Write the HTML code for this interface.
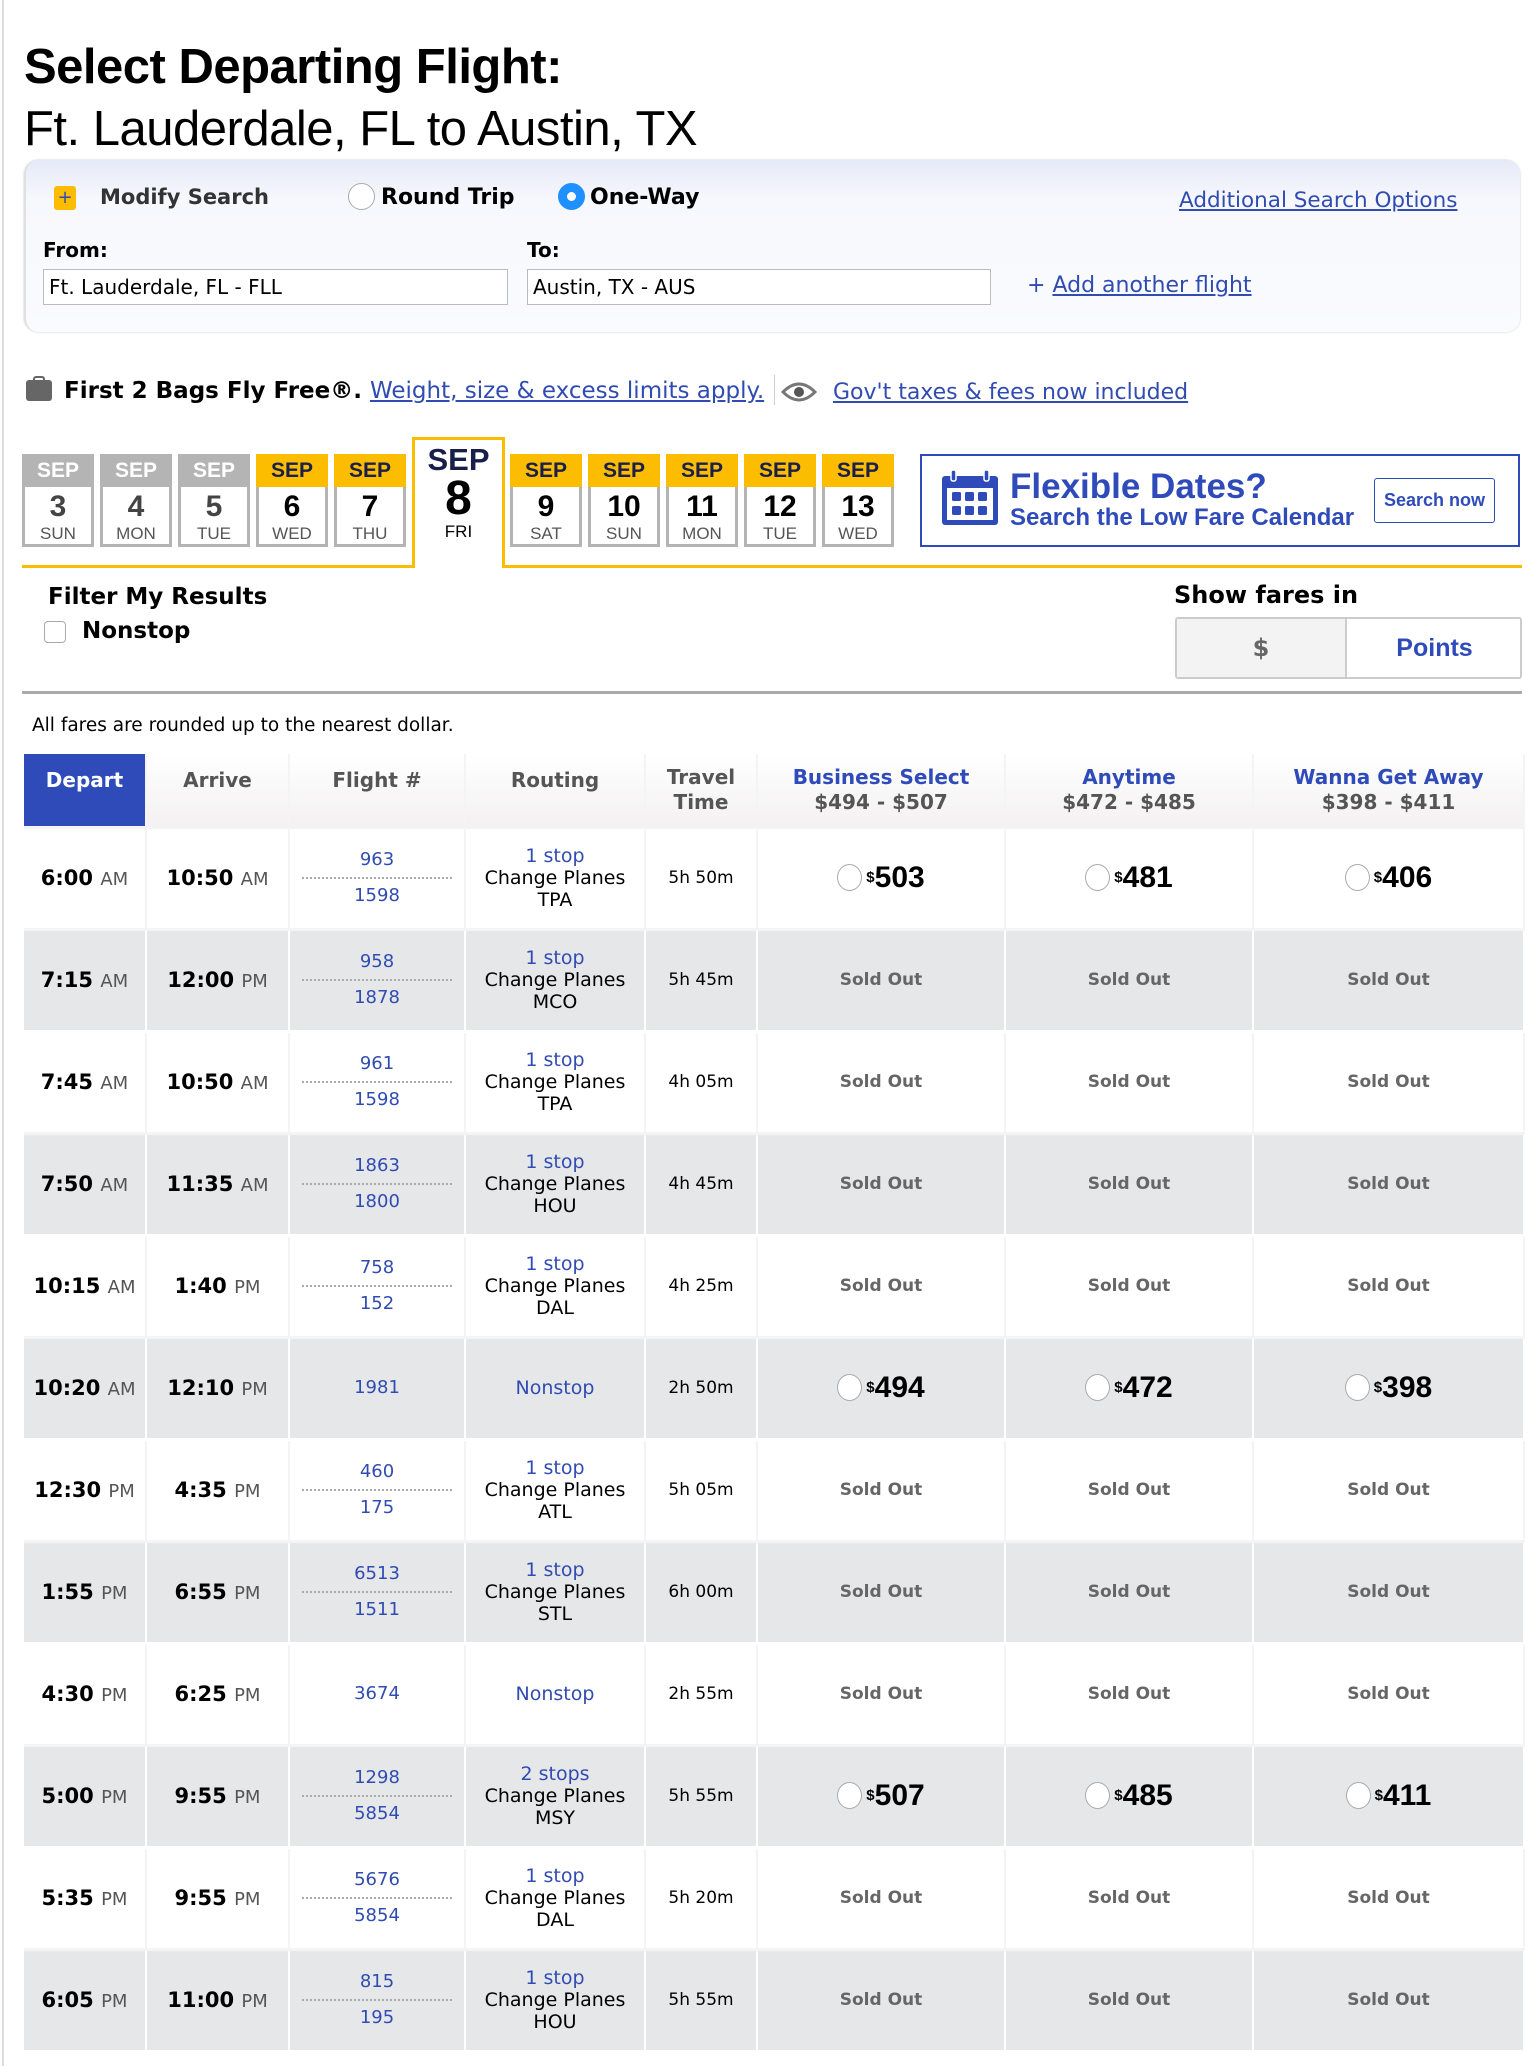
<!DOCTYPE html>
<html><head><meta charset="utf-8">
<style>
*{box-sizing:border-box;margin:0;padding:0}
body{width:1532px;height:2066px;background:#fff;position:relative;overflow:hidden;font-family:"DejaVu Sans","Liberation Sans",sans-serif;color:#000}
.abs{position:absolute}
.lsans{font-family:"Liberation Sans",Arial,sans-serif}
a{color:#304cb2}
.leftline{position:absolute;left:2px;top:0;width:2px;height:2066px;background:#ddd}
.title{left:24px;top:36px;font-family:"Liberation Sans",sans-serif;font-size:49px;line-height:62px;letter-spacing:-0.5px}
.sbox{left:24px;top:160px;width:1496px;height:172px;border-radius:14px;background:linear-gradient(#e6e9f7 0px,#f7f8fd 40px,#fafbfe 100%);box-shadow:0 0 2px #ccc;border-left:2px solid #e0e0e0}
.inp{height:36px;border:1px solid #bbb;background:#fff;font-size:20px;line-height:34px;padding-left:5px;font-family:"DejaVu Sans",sans-serif}
.radio{width:27px;height:27px;border-radius:50%;border:1px solid #aaa;background:#fff}
.dbox{position:absolute;top:454px;width:72px;height:93px;border:3px solid #b4b4b4;border-top:none;background:#fff;text-align:center;font-family:"Liberation Sans",sans-serif}
.dbox .h{height:33px;line-height:33px;font-size:21px;font-weight:bold;margin:0 -3px;color:#fff;background:#b4b4b4}
.dbox.y .h{background:#fcbd00;color:#1a1f4a}
.dbox .n{font-size:30px;font-weight:bold;line-height:34px;margin-top:3px;color:#444}
.dbox.y .n{color:#000}
.dbox .d{font-size:17px;color:#555;line-height:20px}
table{position:absolute;left:24px;top:754px;border-collapse:collapse;width:1500px;table-layout:fixed}
td,th{text-align:center;vertical-align:middle;border-right:2px solid #f4f4f4;border-bottom:3px solid #f4f4f4}
th{height:73px;background:linear-gradient(#fff,#f3f1f1);font-size:20px;color:#555;font-weight:bold;line-height:25px;padding-top:2px}
th.dep{background:#2f4bba;color:#fff;vertical-align:top;padding-top:14px}
th.fare{color:#2f4bba}
th.fare span{color:#555}
tr.r td{height:102px}
tr.g td{background:#e6e7e9;border-right:2px solid #fff;border-bottom:3px solid #fff}
.t{font-size:21px;font-weight:bold}
.t small{font-size:18px;font-weight:normal;color:#555}
.fn{color:#304cb2;font-size:18px;line-height:34px}
.fn .ln{border-top:2px dotted #aaa;margin:0 12px}
.rt{font-size:19px;line-height:22px}
.rt .b{color:#304cb2}
.tt{font-size:17px}
.so{font-size:17px;font-weight:bold;color:#666}
.pr{font-size:30px;font-weight:bold;display:inline-flex;align-items:center;font-family:"Liberation Sans",sans-serif}
.pr i{display:inline-block;width:25px;height:27px;border-radius:50%;border:1px solid #aaa;background:#fff;margin-right:4px}
.pr sup{font-size:15px;vertical-align:10px}
</style></head><body>
<div class="leftline"></div>
<div class="abs title"><b>Select Departing Flight:</b><br>Ft. Lauderdale, FL to Austin, TX</div>

<div class="abs sbox"></div>
<div class="abs" style="left:54px;top:186px;width:22px;height:24px;background:#fcbd00;border-radius:3px;color:#304cb2;font-size:18px;line-height:24px;text-align:center">+</div>
<div class="abs" style="left:100px;top:183px;font-size:21px;font-weight:bold;color:#333;line-height:28px">Modify Search</div>
<div class="abs radio" style="left:348px;top:183px"></div>
<div class="abs" style="left:381px;top:184px;font-size:22px;font-weight:bold;line-height:28px">Round Trip</div>
<div class="abs radio" style="left:558px;top:183px;background:#1e90ff;border-color:#1e90ff"><div style="width:9px;height:9px;border-radius:50%;background:#fff;margin:8px auto"></div></div>
<div class="abs" style="left:590px;top:184px;font-size:22px;font-weight:bold;line-height:28px">One-Way</div>
<a class="abs" style="left:1179px;top:188px;font-size:21.5px;line-height:26px;text-decoration:underline">Additional Search Options</a>
<div class="abs" style="left:43px;top:237px;font-size:20px;font-weight:bold;line-height:26px">From:</div>
<div class="abs" style="left:527px;top:237px;font-size:20px;font-weight:bold;line-height:26px">To:</div>
<div class="abs inp" style="left:43px;top:269px;width:465px">Ft. Lauderdale, FL - FLL</div>
<div class="abs inp" style="left:527px;top:269px;width:464px">Austin, TX - AUS</div>
<div class="abs" style="left:1027px;top:272px;font-size:22px;line-height:28px;color:#304cb2">+&nbsp;<a style="text-decoration:underline">Add another flight</a></div>

<div class="abs" style="left:26px;top:380px;width:26px;height:21px;background:#666;border-radius:3px"></div>
<div class="abs" style="left:33px;top:376px;width:12px;height:6px;border:2px solid #666;border-bottom:none;border-radius:3px 3px 0 0"></div>
<div class="abs" style="left:64px;top:377px;font-size:23px;font-weight:bold;line-height:28px;white-space:nowrap">First 2 Bags Fly Free®. <a style="font-weight:normal;text-decoration:underline">Weight, size &amp; excess limits apply.</a></div>
<div class="abs" style="left:774px;top:375px;width:1px;height:30px;background:#ccc"></div>
<svg class="abs" style="left:781px;top:378px" width="36" height="28" viewBox="0 0 36 28"><path d="M2 14 Q18 -2 34 14 Q18 30 2 14Z" fill="#fff" stroke="#777" stroke-width="3"/><circle cx="18" cy="14" r="5" fill="#555"/></svg>
<a class="abs" style="left:833px;top:379px;font-size:22px;line-height:28px;text-decoration:underline;white-space:nowrap">Gov't taxes &amp; fees now included</a>

<div class="dbox" style="left:22px"><div class="h">SEP</div><div class="n">3</div><div class="d">SUN</div></div>
<div class="dbox" style="left:100px"><div class="h">SEP</div><div class="n">4</div><div class="d">MON</div></div>
<div class="dbox" style="left:178px"><div class="h">SEP</div><div class="n">5</div><div class="d">TUE</div></div>
<div class="dbox y" style="left:256px"><div class="h">SEP</div><div class="n">6</div><div class="d">WED</div></div>
<div class="dbox y" style="left:334px"><div class="h">SEP</div><div class="n">7</div><div class="d">THU</div></div>
<div class="dbox y" style="left:510px"><div class="h">SEP</div><div class="n">9</div><div class="d">SAT</div></div>
<div class="dbox y" style="left:588px"><div class="h">SEP</div><div class="n">10</div><div class="d">SUN</div></div>
<div class="dbox y" style="left:666px"><div class="h">SEP</div><div class="n">11</div><div class="d">MON</div></div>
<div class="dbox y" style="left:744px"><div class="h">SEP</div><div class="n">12</div><div class="d">TUE</div></div>
<div class="dbox y" style="left:822px"><div class="h">SEP</div><div class="n">13</div><div class="d">WED</div></div>
<div class="abs" style="left:22px;top:565px;width:392px;height:3px;background:#fcbd00"></div>
<div class="abs" style="left:502px;top:565px;width:1020px;height:3px;background:#fcbd00"></div>
<div class="abs lsans" style="left:412px;top:437px;width:93px;height:131px;border:3px solid #fcbd00;border-bottom:none;background:#fff;text-align:center">
<div style="font-size:31px;font-weight:bold;color:#1a1f4a;line-height:32px;margin-top:4px">SEP</div>
<div style="font-size:48px;font-weight:bold;line-height:46px">8</div>
<div style="font-size:17px;line-height:20px">FRI</div></div>

<div class="abs lsans" style="left:920px;top:454px;width:600px;height:93px;border:2px solid #2f4bba"></div>
<svg class="abs" style="left:941px;top:470px" width="58" height="56" viewBox="0 0 58 56"><rect x="1" y="6" width="56" height="49" rx="3" fill="#2f4bba"/><rect x="6" y="18" width="46" height="32" fill="#fff"/><rect x="10" y="0" width="5" height="11" rx="2" fill="#2f4bba" stroke="#fff" stroke-width="1.5"/><rect x="43" y="0" width="5" height="11" rx="2" fill="#2f4bba" stroke="#fff" stroke-width="1.5"/><g fill="#2f4bba"><rect x="11" y="22" width="9" height="9" rx="1.5"/><rect x="24" y="22" width="9" height="9" rx="1.5"/><rect x="37" y="22" width="9" height="9" rx="1.5"/><rect x="11" y="36" width="9" height="9" rx="1.5"/><rect x="24" y="36" width="9" height="9" rx="1.5"/><rect x="37" y="36" width="9" height="9" rx="1.5"/></g></svg>
<div class="abs lsans" style="left:1010px;top:467px;font-size:35px;font-weight:bold;color:#2f4bba;line-height:40px">Flexible Dates?</div>
<div class="abs lsans" style="left:1010px;top:504px;font-size:24px;font-weight:bold;color:#2f4bba;line-height:28px">Search the Low Fare Calendar</div>
<div class="abs lsans" style="left:1374px;top:478px;width:121px;height:45px;border:1px solid #2f4bba;border-radius:3px;font-size:18px;font-weight:bold;color:#2f4bba;line-height:43px;text-align:center">Search now</div>

<div class="abs" style="left:48px;top:582px;font-size:23px;font-weight:bold;line-height:30px">Filter My Results</div>
<div class="abs" style="left:44px;top:621px;width:22px;height:22px;border:1px solid #aaa;border-radius:4px;background:#fff"></div>
<div class="abs" style="left:82px;top:616px;font-size:23px;font-weight:bold;line-height:30px">Nonstop</div>
<div class="abs" style="left:1174px;top:580px;font-size:24px;font-weight:bold;line-height:30px">Show fares in</div>
<div class="abs" style="left:1175px;top:617px;width:347px;height:62px;border:2px solid #ccc;border-radius:3px;background:#fff"></div>
<div class="abs" style="left:1177px;top:619px;width:170px;height:58px;background:#f3f3f3;border-right:2px solid #ccc;text-align:center;font-size:24px;font-weight:bold;color:#666;line-height:58px">$</div>
<div class="abs lsans" style="left:1349px;top:619px;width:171px;height:58px;text-align:center;font-size:25px;font-weight:bold;color:#2f4bba;line-height:58px">Points</div>

<div class="abs" style="left:22px;top:691px;width:1500px;height:3px;background:#aaa"></div>
<div class="abs" style="left:32px;top:713px;font-size:18.5px;line-height:26px">All fares are rounded up to the nearest dollar.</div>

<table>
<colgroup><col style="width:122px"><col style="width:143px"><col style="width:176px"><col style="width:180px"><col style="width:112px"><col style="width:248px"><col style="width:248px"><col style="width:271px"></colgroup>
<tr><th class="dep">Depart</th><th style="vertical-align:top;padding-top:14px">Arrive</th><th style="vertical-align:top;padding-top:14px">Flight #</th><th style="vertical-align:top;padding-top:14px">Routing</th><th style="padding-top:0">Travel<br>Time</th><th class="fare" style="padding-top:0">Business Select<br><span>$494 - $507</span></th><th class="fare" style="padding-top:0">Anytime<br><span>$472 - $485</span></th><th class="fare" style="padding-top:0">Wanna Get Away<br><span>$398 - $411</span></th></tr>

<tr class="r"><td class="t">6:00 <small>AM</small></td><td class="t">10:50 <small>AM</small></td><td class="fn">963<div class="ln"></div>1598</td><td class="rt"><span class="b">1 stop</span><br>Change Planes<br>TPA</td><td class="tt">5h 50m</td><td><span class="pr"><i></i><sup>$</sup>503</span></td><td><span class="pr"><i></i><sup>$</sup>481</span></td><td><span class="pr"><i></i><sup>$</sup>406</span></td></tr>
<tr class="r g"><td class="t">7:15 <small>AM</small></td><td class="t">12:00 <small>PM</small></td><td class="fn">958<div class="ln"></div>1878</td><td class="rt"><span class="b">1 stop</span><br>Change Planes<br>MCO</td><td class="tt">5h 45m</td><td class="so">Sold Out</td><td class="so">Sold Out</td><td class="so">Sold Out</td></tr>
<tr class="r"><td class="t">7:45 <small>AM</small></td><td class="t">10:50 <small>AM</small></td><td class="fn">961<div class="ln"></div>1598</td><td class="rt"><span class="b">1 stop</span><br>Change Planes<br>TPA</td><td class="tt">4h 05m</td><td class="so">Sold Out</td><td class="so">Sold Out</td><td class="so">Sold Out</td></tr>
<tr class="r g"><td class="t">7:50 <small>AM</small></td><td class="t">11:35 <small>AM</small></td><td class="fn">1863<div class="ln"></div>1800</td><td class="rt"><span class="b">1 stop</span><br>Change Planes<br>HOU</td><td class="tt">4h 45m</td><td class="so">Sold Out</td><td class="so">Sold Out</td><td class="so">Sold Out</td></tr>
<tr class="r"><td class="t">10:15 <small>AM</small></td><td class="t">1:40 <small>PM</small></td><td class="fn">758<div class="ln"></div>152</td><td class="rt"><span class="b">1 stop</span><br>Change Planes<br>DAL</td><td class="tt">4h 25m</td><td class="so">Sold Out</td><td class="so">Sold Out</td><td class="so">Sold Out</td></tr>
<tr class="r g"><td class="t">10:20 <small>AM</small></td><td class="t">12:10 <small>PM</small></td><td class="fn">1981</td><td class="rt"><span class="b">Nonstop</span></td><td class="tt">2h 50m</td><td><span class="pr"><i></i><sup>$</sup>494</span></td><td><span class="pr"><i></i><sup>$</sup>472</span></td><td><span class="pr"><i></i><sup>$</sup>398</span></td></tr>
<tr class="r"><td class="t">12:30 <small>PM</small></td><td class="t">4:35 <small>PM</small></td><td class="fn">460<div class="ln"></div>175</td><td class="rt"><span class="b">1 stop</span><br>Change Planes<br>ATL</td><td class="tt">5h 05m</td><td class="so">Sold Out</td><td class="so">Sold Out</td><td class="so">Sold Out</td></tr>
<tr class="r g"><td class="t">1:55 <small>PM</small></td><td class="t">6:55 <small>PM</small></td><td class="fn">6513<div class="ln"></div>1511</td><td class="rt"><span class="b">1 stop</span><br>Change Planes<br>STL</td><td class="tt">6h 00m</td><td class="so">Sold Out</td><td class="so">Sold Out</td><td class="so">Sold Out</td></tr>
<tr class="r"><td class="t">4:30 <small>PM</small></td><td class="t">6:25 <small>PM</small></td><td class="fn">3674</td><td class="rt"><span class="b">Nonstop</span></td><td class="tt">2h 55m</td><td class="so">Sold Out</td><td class="so">Sold Out</td><td class="so">Sold Out</td></tr>
<tr class="r g"><td class="t">5:00 <small>PM</small></td><td class="t">9:55 <small>PM</small></td><td class="fn">1298<div class="ln"></div>5854</td><td class="rt"><span class="b">2 stops</span><br>Change Planes<br>MSY</td><td class="tt">5h 55m</td><td><span class="pr"><i></i><sup>$</sup>507</span></td><td><span class="pr"><i></i><sup>$</sup>485</span></td><td><span class="pr"><i></i><sup>$</sup>411</span></td></tr>
<tr class="r"><td class="t">5:35 <small>PM</small></td><td class="t">9:55 <small>PM</small></td><td class="fn">5676<div class="ln"></div>5854</td><td class="rt"><span class="b">1 stop</span><br>Change Planes<br>DAL</td><td class="tt">5h 20m</td><td class="so">Sold Out</td><td class="so">Sold Out</td><td class="so">Sold Out</td></tr>
<tr class="r g"><td class="t">6:05 <small>PM</small></td><td class="t">11:00 <small>PM</small></td><td class="fn">815<div class="ln"></div>195</td><td class="rt"><span class="b">1 stop</span><br>Change Planes<br>HOU</td><td class="tt">5h 55m</td><td class="so">Sold Out</td><td class="so">Sold Out</td><td class="so">Sold Out</td></tr>
</table>
</body></html>
